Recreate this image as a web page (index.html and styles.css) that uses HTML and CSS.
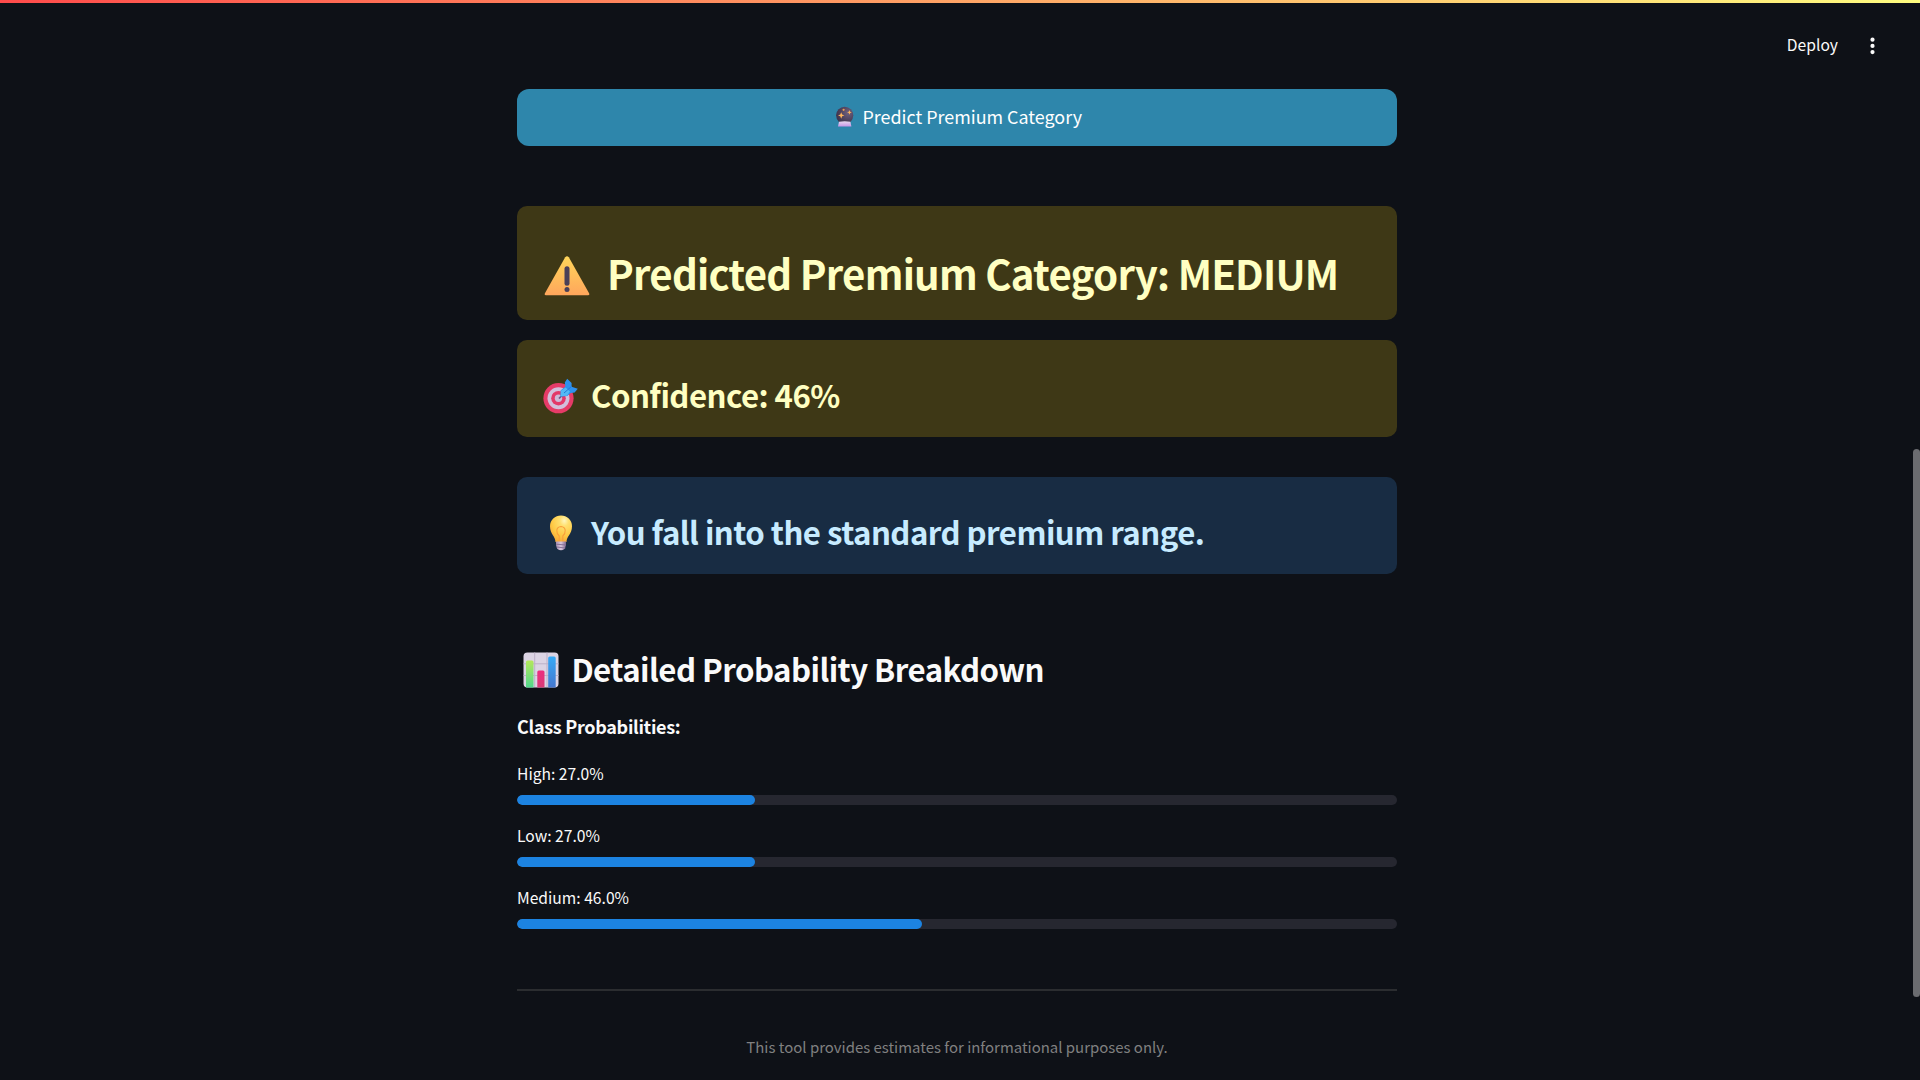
FILE: index.html
```html
<!DOCTYPE html>
<html lang="en">
<head>
<meta charset="utf-8">
<title>Premium Category Predictor</title>
<link rel="stylesheet" href="styles.css">
</head>
<body>
<div class="decoration"></div>
<header class="toolbar">
  <span class="deploy">Deploy</span>
  <svg class="menu-icon" width="20" height="20" viewBox="0 0 20 20" fill="#fafafa"><circle cx="9.5" cy="3.7" r="2.1"/><circle cx="9.5" cy="9.9" r="2.1"/><circle cx="9.5" cy="16.1" r="2.1"/></svg>
</header>
<main class="content">
  <button class="predict">
    <svg class="ball" width="20" height="22" viewBox="0 0 20 22">
      <defs>
        <radialGradient id="orb" cx=".7" cy=".35" r=".8"><stop offset="0" stop-color="#70617f"/><stop offset=".5" stop-color="#51445f"/><stop offset="1" stop-color="#392f48"/></radialGradient>
        <linearGradient id="stand" x2="0" y2="1"><stop offset="0" stop-color="#e6d8ee"/><stop offset="1" stop-color="#c693e6"/></linearGradient>
      </defs>
      <circle cx="9.7" cy="9.3" r="8.6" fill="url(#orb)"/>
      <path d="M4 15.8Q9.7 14.8 15.4 15.8L16.4 20.6H3Z" fill="url(#stand)"/>
      <path d="M6.2 6.3l.9 2.3 2.3.8-2.3.9-.9 2.5-.9-2.5L3 9.4l2.3-.8Z" fill="#ffb45c"/>
      <path d="M14.4 4l.7 1.7 1.7.6-1.7.7-.7 1.7-.6-1.7-1.7-.7 1.7-.6Z" fill="#ffb45c"/>
      <circle cx="8.6" cy="3.8" r="1.1" fill="#e99b52"/>
    </svg>
    <span class="predict-text">Predict Premium Category</span>
  </button>

  <section class="alert warning alert-lg">
    <svg class="warn" width="46" height="40" viewBox="0 0 46 40">
      <defs><linearGradient id="tri" x2="0" y2="1"><stop offset="0" stop-color="#ffd65a"/><stop offset="1" stop-color="#ffa65c"/></linearGradient></defs>
      <path d="M21.2 1.3Q23 -.7 24.8 1.3L45.2 37.4Q45.8 39.3 44 39.3H2Q.2 39.3 .8 37.4Z" fill="url(#tri)"/>
      <rect x="20.5" y="10.2" width="5" height="19.5" rx="2.5" fill="#4b4058"/><circle cx="23" cy="33.5" r="2.5" fill="#4b4058"/>
    </svg>
    <h1>Predicted Premium Category: MEDIUM</h1>
  </section>

  <section class="alert warning">
    <svg class="target" width="36" height="36" viewBox="0 0 36 36">
      <circle cx="15.5" cy="20.2" r="15.1" fill="#e63b68"/><circle cx="15.5" cy="20.2" r="11" fill="#d2bfdc"/><circle cx="15.5" cy="20.2" r="7.3" fill="#e33869"/><circle cx="15.5" cy="20.2" r="3.7" fill="#cdb9d8"/>
      <path d="M16 20.5L24 12.5" stroke="#6a5784" stroke-width="1.7"/>
      <path d="M17.4 18.8L17.6 12.6 22.3 8.4 21.8 4.4 24.2.8 28.6 5.1V8.8L34.8 10.8 31.6 14.6 27.8 15.1 24.2 18.1Z" fill="#2e91ed"/>
      <path d="M17.6 18.2L18 12.8 22.6 9.4 27 13.6 23.8 17.8Z" fill="#54b9f5"/><path d="M21 15L29 8" stroke="#2479d7" stroke-width="1"/>
    </svg>
    <h2>Confidence: 46%</h2>
  </section>

  <section class="alert info">
    <svg class="bulb" width="24" height="36" viewBox="0 0 24 36">
      <defs><radialGradient id="glass" cx=".65" cy=".2" r=".8"><stop offset="0" stop-color="#fff6bd"/><stop offset=".25" stop-color="#ffe070"/><stop offset=".7" stop-color="#ffca45"/><stop offset="1" stop-color="#f8ad39"/></radialGradient>
      <linearGradient id="cap"><stop offset="0" stop-color="#a890b1"/><stop offset=".5" stop-color="#d8c6dc"/><stop offset="1" stop-color="#826990"/></linearGradient></defs>
      <path d="M6.5 27C6.5 21.2 1 19 1 11.2A11 10.8 0 0 1 23 11.2C23 19 17.5 21.2 17.5 27Z" fill="url(#glass)"/>
      <path d="M10.2 26.8V21Q7.5 18.5 7.8 15.3Q8.2 11.8 12 11.5Q15.8 11.8 16.2 15.3Q16.5 18.5 13.8 21V26.8" fill="none" stroke="#fa9f3b" stroke-width="1.1"/>
      <path d="M7 26.5H17V30L16.4 32 15.8 33.7Q12 36.7 8.2 33.7L7.6 32 7 30Z" fill="url(#cap)"/><path d="M7 29.2L17 30M7.7 32L16.3 33" stroke="#806a91" stroke-width=".9"/>
    </svg>
    <h2>You fall into the standard premium range.</h2>
  </section>

  <div class="section-head">
    <svg class="chart" width="36" height="36" viewBox="0 0 36 36">
      <defs><linearGradient id="green" x2="0" y2="1"><stop offset="0" stop-color="#b5e85b"/><stop offset="1" stop-color="#50d68c"/></linearGradient><linearGradient id="blue" x2="0" y2="1"><stop offset="0" stop-color="#36aaf7"/><stop offset="1" stop-color="#4577cf"/></linearGradient><linearGradient id="pink" x2="0" y2="1"><stop offset="0" stop-color="#ed2d7f"/><stop offset="1" stop-color="#d83b76"/></linearGradient></defs>
      <rect x=".5" y=".5" width="35" height="35" rx="4" fill="#dcd4e4"/>
      <path d="M11.7.5V35M24 .5V35M.5 11.8H35.5M.5 23.5H35.5" stroke="#bdb1c8"/>
      <path d="M3 35.5V10Q3 8.5 4.5 8.5H9Q10.5 8.5 10.5 10V35.5Z" fill="url(#green)"/><path d="M14.3 35.5V20Q14.3 18.5 15.8 18.5H20Q21.5 18.5 21.5 20V35.5Z" fill="url(#pink)"/><path d="M25.2 35.5V6Q25.2 4.5 26.7 4.5H31.2Q32.7 4.5 32.7 6V35.5Z" fill="url(#blue)"/>
    </svg>
    <h2>Detailed Probability Breakdown</h2>
  </div>
  <p class="subhead">Class Probabilities:</p>

  <div class="metric"><p class="label">High: 27.0%</p><div class="track"><div class="fill" style="width:27%"></div></div></div>
  <div class="metric"><p class="label">Low: 27.0%</p><div class="track"><div class="fill" style="width:27%"></div></div></div>
  <div class="metric"><p class="label">Medium: 46.0%</p><div class="track"><div class="fill" style="width:46%"></div></div></div>

  <hr class="divider">
  <footer class="note">This tool provides estimates for informational purposes only.</footer>
</main>
<div class="scrollbar"></div>
</body>
</html>
```
FILE: styles.css
```css
* { box-sizing: border-box; }
html, body { margin: 0; height: 100%; overflow: hidden; }
body {
  background: #0e1117;
  color: #fafafa;
  font-family: "Noto Sans CJK SC", "Noto Sans", sans-serif;
  font-size: 15.65px;
}
h1, h2, p { margin: 0; font-weight: 700; white-space: nowrap; }
h1 { font-size: 40.2px; line-height: 54px; letter-spacing: -0.77px; margin-bottom: 6px; }
h2 { font-size: 31.2px; line-height: 42px; letter-spacing: -0.54px; margin-bottom: 2px; }
svg { flex: none; display: block; }
.decoration { height: 3px; background: linear-gradient(90deg, #ff4b4b, #fffd80); }
.toolbar { height: 86px; padding: 0 37px 1px 0; display: flex; justify-content: flex-end; align-items: center; gap: 25px; }
.deploy { line-height: 24px; padding-bottom: 2px; }
.content { width: 880px; margin-left: 517px; display: flex; flex-direction: column; }
.predict {
  height: 57px; margin: 0 0 60px; padding: 0 0 2px 3px; border: 0; border-radius: 12px;
  background: #2e86ab; color: #fff; font: inherit; font-size: 17.9px;
  display: flex; align-items: center; justify-content: center; gap: 7.5px;
}
.predict-text { padding-bottom: 2px; }
.alert { display: flex; align-items: center; border-radius: 10px; height: 97px; padding: 15px 26px 0; gap: 12px; }
.alert-lg { height: 114px; padding: 25px 27px 0; gap: 17px; margin-bottom: 20px; }
.warning { background: #3e3816; color: #ffffc2; }
.info { background: #182c43; color: #c7ebff; margin-top: 40px; padding-left: 32px; gap: 18px; }
.section-head { display: flex; align-items: center; gap: 12.4px; height: 42px; margin-top: 75px; padding-left: 6px; }
.subhead { font-size: 18px; line-height: 30px; letter-spacing: -0.3px; margin-top: 20px; }
.metric { height: 62px; }
.subhead + .metric { margin-top: 21px; }
.label { font-weight: 400; line-height: 24px; height: 33px; }
.track { height: 10px; border-radius: 5px; background: #262730; overflow: hidden; }
.fill { height: 100%; border-radius: 5px; background: #1c83e1; }
.divider { width: 100%; height: 2px; border: 0; margin: 41px 0 0; background: #2b2d30; }
.note { margin-top: 44px; text-align: center; color: #808080; line-height: 24px; font-size: 14.95px; }
.scrollbar { position: absolute; left: 1913px; top: 449px; width: 7px; height: 548px; border-radius: 4px; background: #6b6c70; }
```
